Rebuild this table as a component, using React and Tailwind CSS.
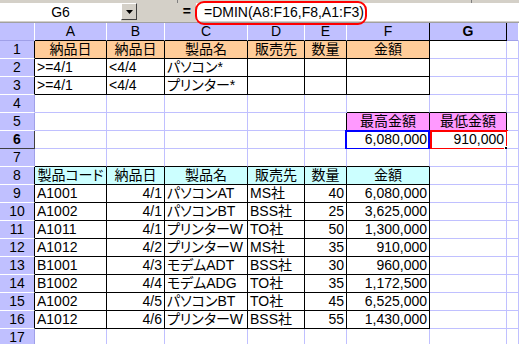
import React from "react";

const COLS = ["A", "B", "C", "D", "E", "F", "G", ""];

function inRange(r, c) {
  if (r >= 1 && r <= 3 && c >= 1 && c <= 6) return true;
  if (r >= 5 && r <= 6 && c >= 6 && c <= 7) return true;
  if (r >= 8 && r <= 16 && c >= 1 && c <= 6) return true;
  return false;
}

const data = {};
function put(r, vals, aligns) {
  vals.forEach((v, i) => {
    if (v !== null) data[`${r}-${i + 1}`] = { t: v, a: aligns[i] };
  });
}
const H = ["c", "c", "c", "c", "c", "c"];
put(1, ["納品日", "納品日", "製品名", "販売先", "数量", "金額"], H);
put(2, [">=4/1", "<4/4", "パソコン*"], ["l", "l", "l"]);
put(3, [">=4/1", "<4/4", "プリンター*"], ["l", "l", "l"]);
put(5, [null, null, null, null, null, "最高金額", "最低金額"], ["c", "c", "c", "c", "c", "c", "c"]);
put(6, [null, null, null, null, null, "6,080,000", "910,000"], ["r", "r", "r", "r", "r", "r", "r"]);
put(8, ["製品コード", "納品日", "製品名", "販売先", "数量", "金額"], H);
const rowsData = [
  ["A1001", "4/1", "パソコンAT", "MS社", "40", "6,080,000"],
  ["A1002", "4/1", "パソコンBT", "BSS社", "25", "3,625,000"],
  ["A1011", "4/1", "プリンターW", "TO社", "50", "1,300,000"],
  ["A1012", "4/2", "プリンターW", "MS社", "35", "910,000"],
  ["B1001", "4/3", "モデムADT", "BSS社", "30", "960,000"],
  ["B1002", "4/4", "モデムADG", "TO社", "35", "1,172,500"],
  ["A1002", "4/5", "パソコンBT", "TO社", "45", "6,525,000"],
  ["A1012", "4/6", "プリンターW", "BSS社", "55", "1,430,000"],
];
rowsData.forEach((row, i) => put(9 + i, row, ["l", "r", "l", "l", "r", "r"]));

function bgFor(r, c) {
  if (r === 1 && c <= 6) return "bg-[#ffcc99]";
  if (r === 8 && c <= 6) return "bg-[#ccffff]";
  if (r === 5 && (c === 6 || c === 7)) return "bg-[#ff99ff]";
  return "bg-white";
}

function Cell({ r, c }) {
  const d = data[`${r}-${c}`];
  const rightBlack = inRange(r, c) || inRange(r, c + 1);
  const bottomBlack = inRange(r, c) || inRange(r + 1, c);
  const align =
    d && d.a === "r" ? "justify-end pr-[2px]" : d && d.a === "c" ? "justify-center" : "justify-start pl-[2px]";
  return (
    <div
      className={
        "relative flex items-center border-r border-b whitespace-nowrap overflow-visible text-[14px] leading-[17px] text-black " +
        bgFor(r, c) +
        " " +
        align +
        " " +
        (rightBlack ? "border-r-black" : "border-r-[#c0c0ff]") +
        " " +
        (bottomBlack ? "border-b-black" : "border-b-[#c0c0ff]")
      }
    >
      {d ? <span>{d.t}</span> : null}
      {r === 6 && c === 6 ? (
        <div className="absolute top-[-1px] left-[-2px] right-[-1px] bottom-[-2px] border-2 border-[#0000ff]" />
      ) : null}
      {r === 6 && c === 7 ? (
        <>
          <div className="absolute top-[-1px] left-0 right-[-2px] bottom-[-2px] border-2 border-[#ff0000]" />
          <div className="absolute right-[-4px] bottom-[-4px] w-[6px] h-[6px] bg-black border border-white" />
        </>
      ) : null}
    </div>
  );
}

function RowHeader({ r }) {
  const sel = r === 6;
  const rightBlack = inRange(r, 1);
  return (
    <div
      className={
        "flex items-center justify-center border-r border-b text-[14px] leading-[17px] text-black bg-[#c0c0ff] " +
        (sel ? "font-bold border-b-[#404040] " : "border-b-white ") +
        (rightBlack ? "border-r-black" : sel ? "border-r-[#404040]" : "border-r-[#a0a0e8]")
      }
    >
      {r}
    </div>
  );
}

function ColHeader({ c }) {
  const sel = c === 7;
  const bottomBlack = inRange(1, c);
  return (
    <div
      className={
        "flex items-center justify-center border-r border-b text-[14px] leading-[17px] text-black bg-[#c0c0ff] " +
        (sel || c === 6 ? "border-r-black " : "border-r-white ") +
        (bottomBlack || sel ? "border-b-black " : "border-b-[#a0a0e8] ") +
        (sel ? "font-bold" : "")
      }
    >
      {COLS[c - 1]}
    </div>
  );
}

export default function App() {
  const rows = [];
  for (let r = 1; r <= 17; r++) rows.push(r);
  const cols = [1, 2, 3, 4, 5, 6, 7, 8];
  return (
    <div className="w-[519px] h-[344px] overflow-hidden bg-white font-['Liberation_Sans','Noto_Sans_CJK_JP',sans-serif] [font-feature-settings:'palt']">
      {/* formula bar */}
      <div className="relative h-[23px] bg-[#d4d0c8] border-b border-b-[#a0a0a0] flex items-start">
        <div className="absolute top-0 left-[177px] w-px h-[3px] bg-[#808080]" />
        <div className="absolute top-0 left-[471px] w-px h-[3px] bg-[#808080]" />
        <div className="mt-[3px] w-[121px] h-[18px] bg-white flex items-center justify-center text-[14px] leading-[17px]">
          G6
        </div>
        <div className="mt-[3px] w-[16px] h-[17px] bg-[#d4d0c8] border border-t-white border-l-white border-r-[#404040] border-b-[#404040] flex items-center justify-center">
          <svg width="7" height="4" viewBox="0 0 7 4">
            <polygon points="0,0 7,0 3.5,4" fill="#000" />
          </svg>
        </div>
        <div className="w-[59px] h-[22px] flex items-center justify-end pr-[5px] text-[14px] font-bold">=</div>
        <div className="mt-[3px] flex-1 h-[18px] bg-white flex items-center pl-[8px] text-[14px] leading-[17px] whitespace-nowrap">
          =DMIN(A8:F16,F8,A1:F3)
        </div>
        <div className="absolute left-[195px] top-[1px] w-[172px] h-[24px] border-2 border-[#ff0000] rounded-[9px] z-10" />
      </div>
      {/* sheet grid */}
      <div className="grid grid-cols-[35px_72px_58px_83px_57px_42px_83px_77px_1fr] auto-rows-[18px]">
        <div className="bg-[#c0c0ff] border-r border-b border-r-white border-b-[#a0a0e8]" />
        {cols.map((c) => (
          <ColHeader key={"h" + c} c={c} />
        ))}
        {rows.map((r) => (
          <React.Fragment key={r}>
            <RowHeader r={r} />
            {cols.map((c) => (
              <Cell key={r + "-" + c} r={r} c={c} />
            ))}
          </React.Fragment>
        ))}
      </div>
    </div>
  );
}
